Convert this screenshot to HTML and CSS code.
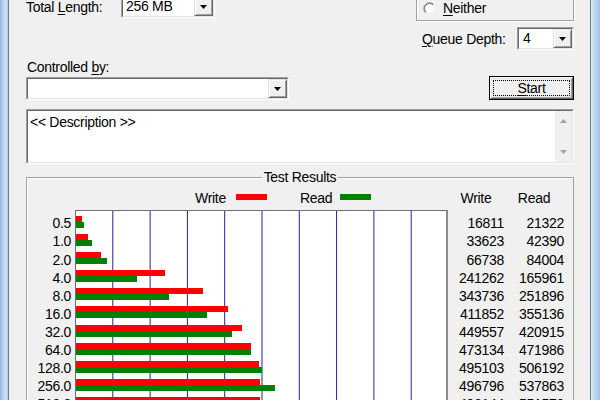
FILE: index.html
```html
<!DOCTYPE html>
<html>
<head>
<meta charset="utf-8">
<title>Disk Benchmark</title>
<link rel="stylesheet" href="styles.css">
</head>
<body>
<div class="window">
  <div class="frame-left"></div>
  <div class="dialog">
    <div class="row-top">
      <div class="field">
        <span class="label label-total">Total <u>L</u>ength:</span>
        <div class="combo combo-total"><div class="combo-in"><span class="combo-text">256 MB</span><span class="drop"><svg width="7" height="4" viewBox="0 0 7 4"><path d="M0 0h7L3.5 4z" fill="#000"/></svg></span></div></div>
      </div>
      <div class="groupbox io-group">
        <div class="radio-row">
          <svg class="radio" width="13" height="13" viewBox="0 0 13 13">
            <circle cx="6.5" cy="6.5" r="5.5" fill="#fff"/>
            <path d="M2.26 10.74A6 6 0 0 1 10.74 2.26" fill="none" stroke="#a0a0a0"/>
            <path d="M10.74 2.26A6 6 0 0 1 2.26 10.74" fill="none" stroke="#fff"/>
            <path d="M2.96 10.04A5 5 0 0 1 10.04 2.96" fill="none" stroke="#696969"/>
            <path d="M10.04 2.96A5 5 0 0 1 2.96 10.04" fill="none" stroke="#e3e3e3"/>
          </svg>
          <span class="label"><u>N</u>either</span>
        </div>
      </div>
    </div>
    <div class="row-queue">
      <span class="label label-queue"><u>Q</u>ueue Depth:</span>
      <div class="combo combo-queue"><div class="combo-in"><span class="combo-text">4</span><span class="drop"><svg width="7" height="4" viewBox="0 0 7 4"><path d="M0 0h7L3.5 4z" fill="#000"/></svg></span></div></div>
    </div>
    <div class="label label-ctrl">Controlled <u>b</u>y:</div>
    <div class="row-ctrl">
      <div class="combo combo-ctrl"><div class="combo-in"><span class="combo-text"></span><span class="drop"><svg width="7" height="4" viewBox="0 0 7 4"><path d="M0 0h7L3.5 4z" fill="#000"/></svg></span></div></div>
      <div class="btn-start"><div class="btn-in"><div class="focus"><span><u>S</u>tart</span></div></div></div>
    </div>
    <div class="desc">
      <div class="desc-in">
        <div class="desc-text">&lt;&lt; Description &gt;&gt;</div>
        <div class="vscroll">
          <svg width="7" height="4" viewBox="0 0 7 4"><path d="M0 4h7L3.5 0z" fill="#a3a3a3"/></svg>
          <svg width="7" height="4" viewBox="0 0 7 4"><path d="M0 0h7L3.5 4z" fill="#a3a3a3"/></svg>
        </div>
      </div>
    </div>
    <div class="results">
      <div class="results-title">Test Results</div>
      <div class="chart">
        <div></div>
        <div class="legend"><span>Write</span><span class="sw sw-w"></span><span class="legend-read">Read</span><span class="sw sw-r"></span></div>
        <div class="hdr">Write</div>
        <div class="hdr">Read</div>

        <div class="labels">
          <div>0.5</div><div>1.0</div><div>2.0</div><div>4.0</div><div>8.0</div><div>16.0</div><div>32.0</div><div>64.0</div><div>128.0</div><div>256.0</div><div>512.0</div>
        </div>
        <div class="plot">
          <div class="bar-row"><div class="bw" style="width:6.2px"></div><div class="br" style="width:7.9px"></div></div>
          <div class="bar-row"><div class="bw" style="width:12.4px"></div><div class="br" style="width:15.7px"></div></div>
          <div class="bar-row"><div class="bw" style="width:24.7px"></div><div class="br" style="width:31.1px"></div></div>
          <div class="bar-row"><div class="bw" style="width:89.3px"></div><div class="br" style="width:61.4px"></div></div>
          <div class="bar-row"><div class="bw" style="width:127.2px"></div><div class="br" style="width:93.2px"></div></div>
          <div class="bar-row"><div class="bw" style="width:152.4px"></div><div class="br" style="width:131.4px"></div></div>
          <div class="bar-row"><div class="bw" style="width:166.3px"></div><div class="br" style="width:155.7px"></div></div>
          <div class="bar-row"><div class="bw" style="width:175.1px"></div><div class="br" style="width:174.6px"></div></div>
          <div class="bar-row"><div class="bw" style="width:183.2px"></div><div class="br" style="width:186.3px"></div></div>
          <div class="bar-row"><div class="bw" style="width:183.8px"></div><div class="br" style="width:199px"></div></div>
          <div class="bar-row"><div class="bw" style="width:183.6px"></div><div class="br" style="width:204.1px"></div></div>
        </div>
        <div class="ncol">
          <div>16811</div><div>33623</div><div>66738</div><div>241262</div><div>343736</div><div>411852</div><div>449557</div><div>473134</div><div>495103</div><div>496796</div><div>496144</div>
        </div>
        <div class="ncol">
          <div>21322</div><div>42390</div><div>84004</div><div>165961</div><div>251896</div><div>355136</div><div>420915</div><div>471986</div><div>506192</div><div>537863</div><div>551570</div>
        </div>
      </div>
    </div>
  </div>
  <div class="frame-right"></div>
</div>
</body>
</html>
```

FILE: styles.css
```css
* { box-sizing: border-box; }
html, body { margin: 0; padding: 0; }
body {
  width: 600px;
  height: 400px;
  overflow: hidden;
  background: #f0f0f0;
  color: #000;
  font-family: "Liberation Sans", Arial, sans-serif;
  font-size: 14px;
  letter-spacing: -0.3px;
}
u { text-decoration: underline; text-underline-offset: 2px; }

.window { display: flex; height: 400px; }
.frame-left {
  width: 8px;
  flex: none;
  background: linear-gradient(to right, #96b9df 0, #b5d0ee 35%, #d0e2f5 70%, #b6cde6 100%);
}
.frame-right {
  width: 9px;
  flex: none;
  background: linear-gradient(to right, #e4eef9 0, #c6dcf2 25%, #b2cdec 70%, #a2c2e6 100%);
}
.dialog {
  flex: 1;
  min-width: 0;
  background: #f0f0f0;
  border-left: 1px solid #6f7e8e;
  border-right: 1px solid #6f7e8e;
  padding: 0 16px 0 17px;
  display: flex;
  flex-direction: column;
}
.dialog > * { flex-shrink: 0; }

.label { line-height: 16px; white-space: nowrap; }

/* top row */
.row-top { display: flex; justify-content: space-between; align-items: flex-start; }
.field { display: flex; align-items: center; margin-top: -5px; }
.label-total { width: 95px; }

.combo {
  height: 23px;
  border: 1px solid;
  border-color: #a0a0a0 #fff #fff #a0a0a0;
  background: #fff;
}
.combo-in {
  height: 100%;
  border: 1px solid;
  border-color: #696969 #e3e3e3 #e3e3e3 #696969;
  display: flex;
}
.combo-text { flex: 1; padding-left: 3px; line-height: 19px; white-space: nowrap; }
.drop {
  width: 19px;
  border: 1px solid;
  border-color: #e3e3e3 #696969 #696969 #e3e3e3;
  box-shadow: inset 1px 1px #fff, inset -1px -1px #a0a0a0;
  background: #f0f0f0;
  display: flex;
  align-items: center;
  justify-content: center;
}
.combo-total { width: 94px; }
.combo-queue { width: 57px; }
.combo-queue .combo-text { padding-left: 4px; }
.combo-ctrl { width: 263px; margin-top: 1px; }

.groupbox {
  border: 1px solid #a0a0a0;
  box-shadow: inset 1px 1px #fff, 1px 1px #fff;
}
.io-group {
  width: 158px;
  height: 62px;
  margin-top: -41px;
  display: flex;
  flex-direction: column;
  justify-content: flex-end;
  padding: 0 0 4px 6px;
}
.radio-row { display: flex; align-items: center; height: 16px; gap: 7px; }
.radio { display: block; }

/* queue depth */
.row-queue {
  display: flex;
  justify-content: flex-end;
  align-items: center;
  margin-top: 6px;
  height: 23px;
}
.label-queue { width: 95px; }

/* controlled by */
.label-ctrl { margin-top: 9px; padding-left: 1px; }
.row-ctrl { display: flex; justify-content: space-between; align-items: flex-start; margin-top: 1px; }

.btn-start {
  width: 85px;
  height: 24px;
  border: 1px solid #000;
}
.btn-in {
  height: 100%;
  border: 1px solid;
  border-color: #fff #696969 #696969 #fff;
  box-shadow: inset 1px 1px #e3e3e3, inset -1px -1px #a0a0a0;
  background: #f0f0f0;
  padding: 2px;
  display: flex;
}
.focus {
  flex: 1;
  border: 1px dotted #000;
  display: flex;
  align-items: center;
  justify-content: center;
  line-height: 16px;
}

/* description */
.desc {
  margin-top: 9px;
  height: 55px;
  border: 1px solid;
  border-color: #a0a0a0 #fff #fff #a0a0a0;
  display: flex;
}
.desc-in {
  flex: 1;
  border: 1px solid;
  border-color: #696969 #e3e3e3 #e3e3e3 #696969;
  background: #fff;
  display: flex;
}
.desc-text { flex: 1; padding: 3px 0 0 2px; line-height: 16px; }
.vscroll {
  width: 17px;
  background: #f0f0f0;
  display: flex;
  flex-direction: column;
  justify-content: space-between;
  align-items: center;
  padding: 8px 0;
}
.vscroll svg { display: block; }

/* results */
.results {
  margin-top: 13px;
  border: 1px solid #a0a0a0;
  border-bottom: 0;
  box-shadow: inset 1px 1px #fff;
}
.results-title {
  width: max-content;
  margin: -9px auto 0;
  padding: 0 2px;
  background: #f0f0f0;
  line-height: 17px;
}
.chart {
  display: grid;
  grid-template-columns: 48px 373px 56px 60px;
  grid-template-rows: 20px auto;
  margin-top: 4px;
}
.legend { display: flex; align-items: flex-start; padding-left: 120px; line-height: 17px; }
.sw { width: 31px; height: 6px; margin-top: 4px; }
.sw-w { background: #ff0000; margin-left: 10px; }
.sw-r { background: #008000; margin-left: 8px; }
.legend-read { margin-left: 33px; }
.hdr { text-align: center; line-height: 17px; }

.labels { padding: 4.4px 4px 0 0; text-align: right; }
.labels div, .ncol div { height: 18.1px; line-height: 18.1px; white-space: nowrap; }
.ncol { padding-top: 4.4px; text-align: right; }

.plot {
  border: 1px solid #6e6e6e;
  border-right: 2px solid #8c8c8c;
  border-bottom: 0;
  background-color: #fff;
  background-image: linear-gradient(to right, transparent 0, transparent 36.3px, #1f1f98 36.3px, #1f1f98 37.3px);
  background-size: 37.3px 100%;
  background-repeat: repeat-x;
  padding-top: 5px;
}
.bar-row { height: 18.1px; }
.bw { height: 6px; background: #ff0000; }
.br { height: 6px; background: #008000; }
```
